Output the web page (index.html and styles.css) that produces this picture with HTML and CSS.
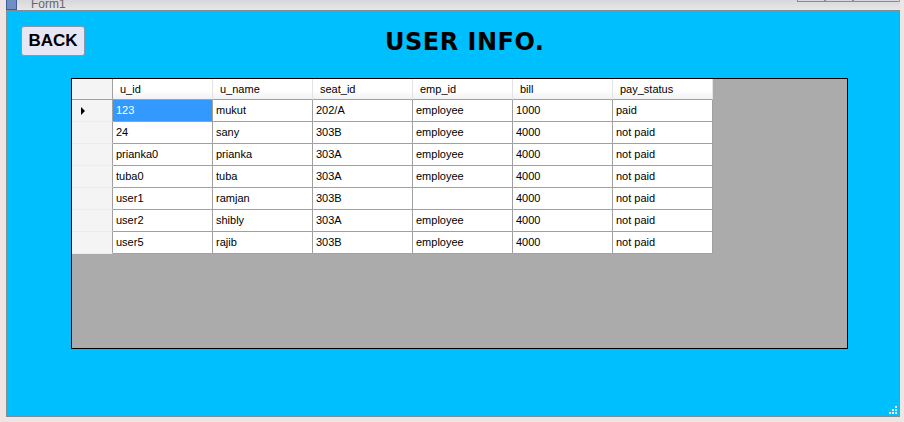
FILE: index.html
```html
<!DOCTYPE html>
<html>
<head>
    <meta charset="utf-8" />
    <title>Form1</title>
    <link rel="stylesheet" href="styles.css">
</head>
<body>
    <div class="frame">
        <div class="titlebar">
            <div class="caption">
                <span class="app-icon"></span>
                <span class="app-name">Form1</span>
            </div>
            <div class="caption-btns">
                <span class="cbtn"></span>
                <span class="cbtn"></span>
                <span class="cbtn wide"></span>
            </div>
        </div>
        <div class="client">
            <div class="top">
                <button class="back-btn">BACK</button>
                <h1 class="title">USER INFO.</h1>
            </div>
            <div class="grid">
                <table class="data">
                    <colgroup>
                        <col class="c-head">
                        <col class="c-col"><col class="c-col"><col class="c-col">
                        <col class="c-col"><col class="c-col"><col class="c-col">
                    </colgroup>
                    <thead>
                        <tr>
                            <th class="corner"></th>
                            <th>u_id</th>
                            <th>u_name</th>
                            <th>seat_id</th>
                            <th>emp_id</th>
                            <th>bill</th>
                            <th>pay_status</th>
                        </tr>
                    </thead>
                    <tbody>
                        <tr>
                            <td class="rowhead"><span class="arrow"></span></td>
                            <td class="selected">123</td><td>mukut</td><td>202/A</td><td>employee</td><td>1000</td><td>paid</td>
                        </tr>
                        <tr>
                            <td class="rowhead"></td>
                            <td>24</td><td>sany</td><td>303B</td><td>employee</td><td>4000</td><td>not paid</td>
                        </tr>
                        <tr>
                            <td class="rowhead"></td>
                            <td>prianka0</td><td>prianka</td><td>303A</td><td>employee</td><td>4000</td><td>not paid</td>
                        </tr>
                        <tr>
                            <td class="rowhead"></td>
                            <td>tuba0</td><td>tuba</td><td>303A</td><td>employee</td><td>4000</td><td>not paid</td>
                        </tr>
                        <tr>
                            <td class="rowhead"></td>
                            <td>user1</td><td>ramjan</td><td>303B</td><td></td><td>4000</td><td>not paid</td>
                        </tr>
                        <tr>
                            <td class="rowhead"></td>
                            <td>user2</td><td>shibly</td><td>303A</td><td>employee</td><td>4000</td><td>not paid</td>
                        </tr>
                        <tr>
                            <td class="rowhead"></td>
                            <td>user5</td><td>rajib</td><td>303B</td><td>employee</td><td>4000</td><td>not paid</td>
                        </tr>
                    </tbody>
                </table>
            </div>
            <svg class="grip" width="9" height="9" viewBox="0 0 9 9">
                <rect x="7" y="1" width="2" height="2" fill="#e8f6ff"/>
                <rect x="4" y="4" width="2" height="2" fill="#e8f6ff"/>
                <rect x="7" y="4" width="2" height="2" fill="#e8f6ff"/>
                <rect x="1" y="7" width="2" height="2" fill="#e8f6ff"/>
                <rect x="4" y="7" width="2" height="2" fill="#e8f6ff"/>
                <rect x="7" y="7" width="2" height="2" fill="#e8f6ff"/>
            </svg>
        </div>
    </div>
</body>
</html>
```

FILE: styles.css
```css
html, body {
    margin: 0;
    padding: 0;
}

body {
    width: 904px;
    height: 422px;
    overflow: hidden;
    background-color: #efe5e3;
    font-family: "Liberation Sans", Arial, sans-serif;
}

.frame {
    padding: 0 4px 5px 6px;
}

.titlebar {
    height: 10px;
    overflow: hidden;
    display: flex;
    justify-content: space-between;
    background: linear-gradient(#d6d8dd, #e9e6e6);
}

.caption {
    display: flex;
    align-items: flex-end;
    gap: 14px;
    margin-top: -7px;
}

.app-icon {
    width: 9px;
    height: 10px;
    background-color: #6f8fc4;
    border: 1px solid #3d5c9a;
}

.app-name {
    font-size: 12px;
    color: #666;
    line-height: 12px;
}

.caption-btns {
    display: flex;
    height: 2px;
}

.cbtn {
    width: 26px;
    border: 1px solid #8c8c8c;
    border-top: none;
}

.cbtn.wide {
    width: 45px;
    border-radius: 0 0 3px 0;
}

.client {
    width: 892px;
    height: 405px;
    border: 1px solid #7f8d99;
    background-color: #00bfff;
    display: flex;
    flex-direction: column;
}

.top {
    display: flex;
    align-items: flex-start;
    padding: 15px 0 0 14px;
}

.back-btn {
    width: 64px;
    height: 30px;
    padding: 0;
    border: 1px solid #8b97a8;
    border-radius: 3px;
    background-color: #e6e6f5;
    font-family: "Liberation Sans", Arial, sans-serif;
    font-weight: bold;
    font-size: 17px;
    color: #000;
}

.title {
    margin: 2px 0 0 300px;
    font-family: "DejaVu Sans", sans-serif;
    font-size: 24px;
    line-height: 28px;
    font-weight: bold;
    letter-spacing: 0.5px;
    color: #000;
}

.grid {
    margin: 22px 0 0 64px;
    width: 775px;
    height: 269px;
    border: 1px solid #000;
    background-color: #ababab;
}

.data {
    table-layout: fixed;
    width: 641px;
    border-collapse: separate;
    border-spacing: 0;
    font-size: 11px;
    color: #000;
}

.c-head {
    width: 41px;
}

.c-col {
    width: 100px;
}

.data th {
    height: 20px;
    padding: 0 0 0 7px;
    text-align: left;
    font-weight: normal;
    line-height: 20px;
    background: linear-gradient(#ffffff 55%, #f1f2f4);
    border-right: 1px solid #e3e4e8;
    border-bottom: 1px solid #a0a0a0;
    white-space: nowrap;
}

.data th.corner {
    background: #f4f4f4;
    border-right: 1px solid #a0a0a0;
}

.data td {
    height: 21px;
    padding: 0 3px;
    line-height: 21px;
    background-color: #fff;
    border-right: 1px solid #a0a0a0;
    border-bottom: 1px solid #a0a0a0;
    white-space: nowrap;
    overflow: hidden;
}

.data td.rowhead {
    background-color: #f4f4f4;
    border-bottom-color: #ececec;
    padding: 0 0 0 9px;
}

.data td.selected {
    background-color: #3399ff;
    color: #fff;
}

.arrow {
    display: inline-block;
    vertical-align: middle;
    width: 0;
    height: 0;
    border-left: 4px solid #000;
    border-top: 4px solid transparent;
    border-bottom: 4px solid transparent;
}

.grip {
    margin: auto 2px 2px 0;
    align-self: flex-end;
}
```
